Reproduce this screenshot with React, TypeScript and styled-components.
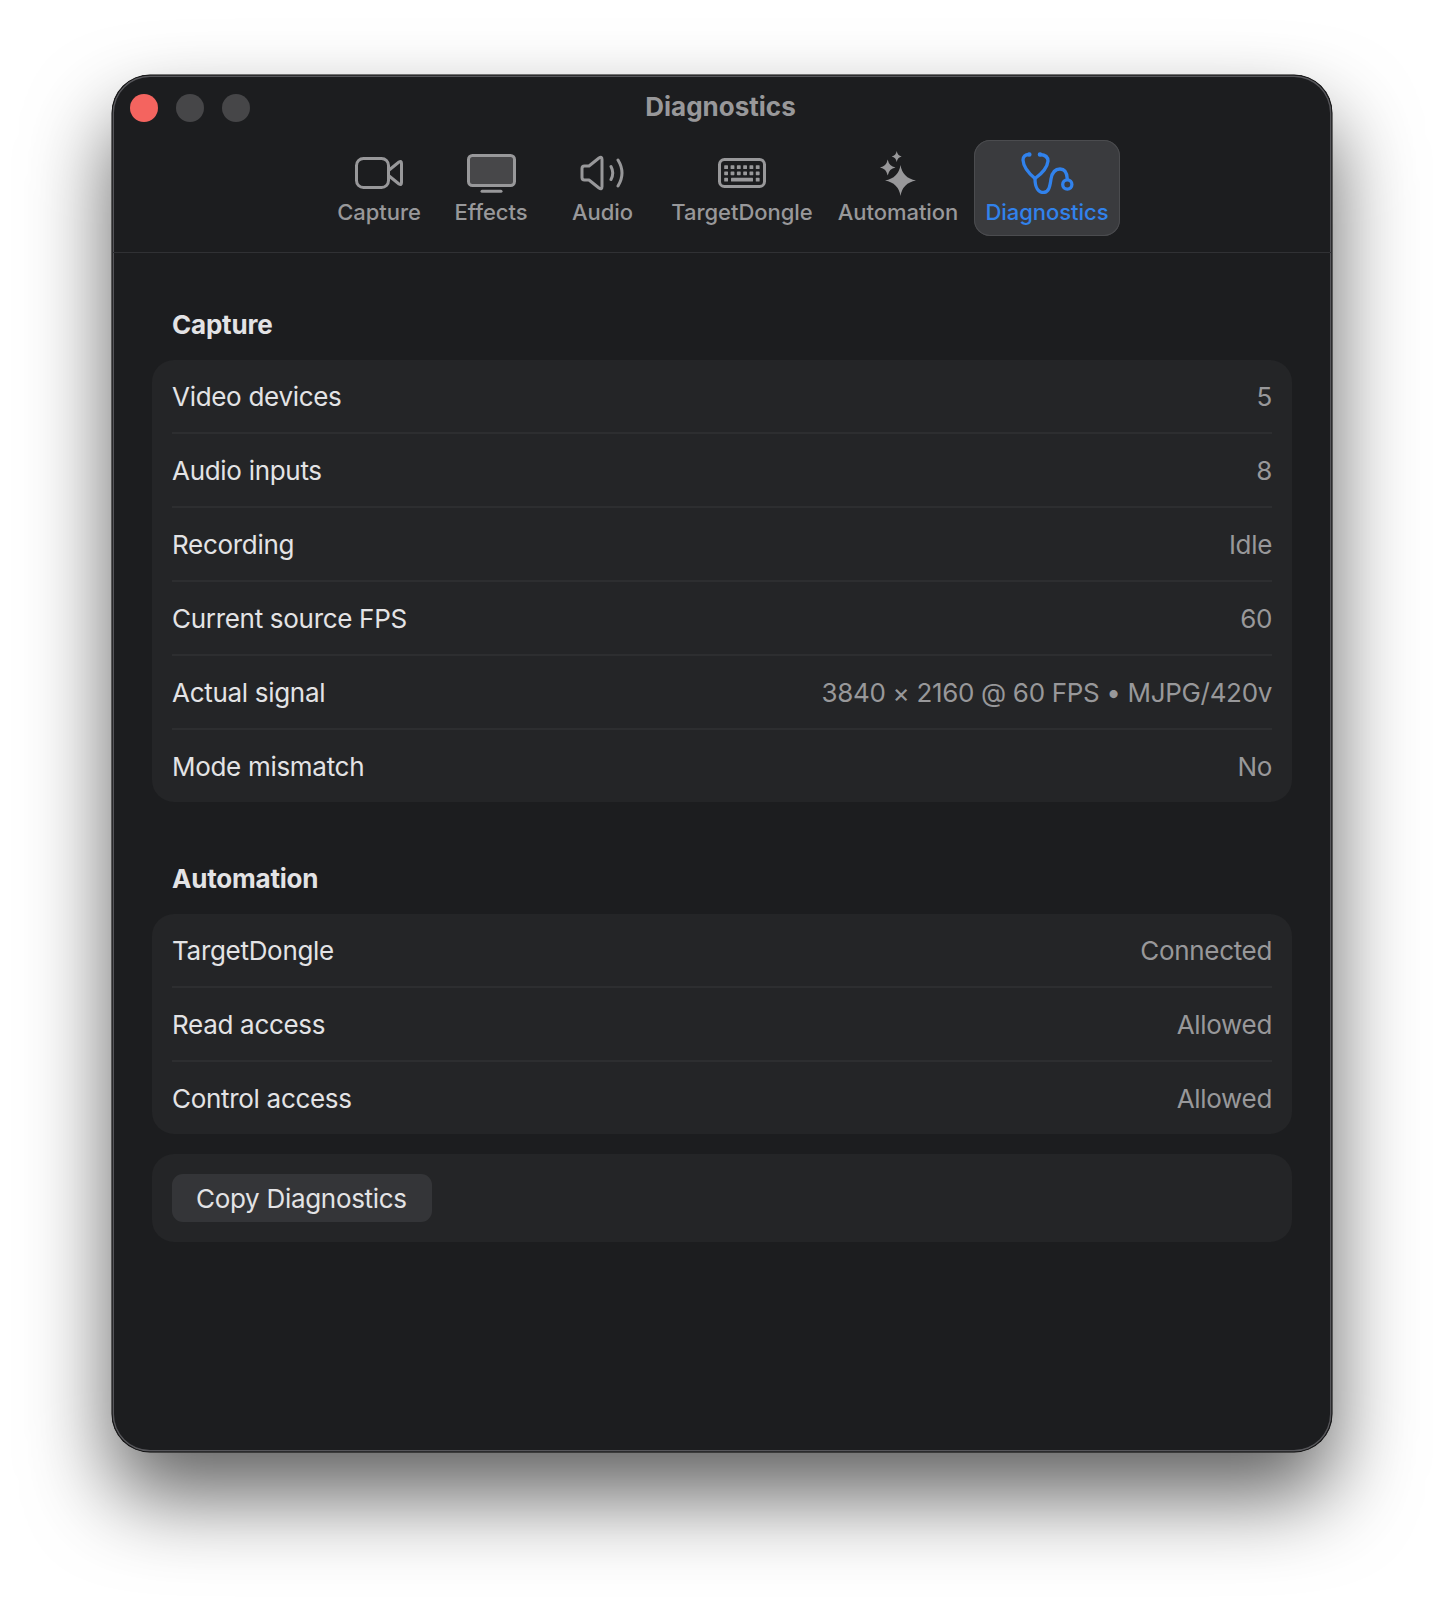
import React from 'react';
import styled, { createGlobalStyle } from 'styled-components';

const GlobalStyle = createGlobalStyle`
  html, body {
    margin: 0;
    padding: 0;
    background: #fff;
  }
  body {
    font-family: Inter, "Liberation Sans", sans-serif;
  }
`;

type RowData = { label: string; value: string };

const captureRows: RowData[] = [
  { label: 'Video devices', value: '5' },
  { label: 'Audio inputs', value: '8' },
  { label: 'Recording', value: 'Idle' },
  { label: 'Current source FPS', value: '60' },
  { label: 'Actual signal', value: '3840 × 2160 @ 60 FPS • MJPG/420v' },
  { label: 'Mode mismatch', value: 'No' },
];

const automationRows: RowData[] = [
  { label: 'TargetDongle', value: 'Connected' },
  { label: 'Read access', value: 'Allowed' },
  { label: 'Control access', value: 'Allowed' },
];

function CaptureIcon() {
  return (
    <svg width="48" height="32" viewBox="0 0 48 32" fill="none" stroke="currentColor" strokeWidth="3" strokeLinejoin="round">
      <rect x="1.5" y="1.500" width="32" height="29" rx="7" />
      <path d="M33.500 13.500 44 5q2.500-1.500 2.500 1.500v19q0 3-2.500 1.500L33.500 18.500" />
    </svg>
  );
}

function EffectsIcon() {
  return (
    <svg width="49" height="39" viewBox="0 0 49 39" fill="none" stroke="currentColor" strokeWidth="3">
      <rect x="1.500" y="1.500" width="46" height="30" rx="4" fill="#474749" />
      <path d="M15 37.200h19" strokeLinecap="round" />
    </svg>
  );
}

function AudioIcon() {
  return (
    <svg width="46" height="36" viewBox="0 0 46 36" fill="none" stroke="currentColor" strokeWidth="3" strokeLinecap="round" strokeLinejoin="round">
      <path d="M2 13.500Q2 11 4.500 11H9L19 3q3-2 3 1.500v27q0 3.500-3 1.500L9 25H4.500Q2 25 2 22.500z" />
      <path d="M31 11.500Q34.500 18 31 24.500M38 5q8 13 0 26" />
    </svg>
  );
}

function KeyboardIcon() {
  const xs = [6.2, 12.6, 18.9, 25.2, 31.5, 37.8];
  return (
    <svg width="48" height="30" viewBox="0 0 48 30" fill="currentColor">
      <rect x="1.500" y="1.500" width="45" height="27" rx="5" fill="none" stroke="currentColor" strokeWidth="3" />
      {xs.map(x => (
        <rect key={`a${x}`} x={x} y="7.200" width="3.800" height="3.800" rx="0.6" />
      ))}
      {xs.map(x => (
        <rect key={`b${x}`} x={x} y="13.400" width="3.800" height="3.800" rx="0.6" />
      ))}
      <rect x="6.200" y="19.800" width="3.800" height="3.800" rx="0.6" />
      <rect x="13" y="19.800" width="22" height="3.800" rx="0.6" />
      <rect x="37.800" y="19.800" width="3.800" height="3.800" rx="0.6" />
    </svg>
  );
}

function SparkleIcon() {
  return (
    <svg width="36" height="45" viewBox="0 0 36 45" fill="currentColor">
      <path d="M20.500 14Q22.500 27 36 29.500 22.500 32 20.500 45 18.500 32 5 29.500 18.500 27 20.500 14z" />
      <path d="M7.700 8.500Q9 15.300 15.500 16.500 9 17.700 7.700 24.500 6.400 17.700 0 16.500 6.400 15.300 7.700 8.500z" />
      <path d="M16.700 0Q17.500 4.700 21.700 5.500 17.500 6.300 16.700 11 15.900 6.300 11.700 5.500 15.900 4.700 16.700 0z" />
    </svg>
  );
}

function StethoscopeIcon() {
  return (
    <svg width="53" height="42" viewBox="0 0 53 42" fill="none" stroke="currentColor" strokeWidth="3.300" strokeLinecap="round">
      <path d="M8 2.500Q2 2.500 2 8q.5 9 12 18.500M19 2.500Q27 3 27 9q-1 9-13 17.500" />
      <path d="M14 26.500C14 35 17 40.500 22.500 40.500 28 40.500 29 34 30 27 31 21 34 17 39 17 44 17 46 21 46.300 27" />
      <circle cx="8.300" cy="2.500" r="1.300" fill="currentColor" strokeWidth="2" />
      <circle cx="19" cy="2.500" r="1.300" fill="currentColor" strokeWidth="2" />
      <circle cx="46.300" cy="32.500" r="4.600" />
    </svg>
  );
}

const tabs = [
  { label: 'Capture', icon: <CaptureIcon />, width: 112 },
  { label: 'Effects', icon: <EffectsIcon />, width: 112 },
  { label: 'Audio', icon: <AudioIcon />, width: 111 },
  { label: 'TargetDongle', icon: <KeyboardIcon />, width: 168 },
  { label: 'Automation', icon: <SparkleIcon />, width: 144 },
  { label: 'Diagnostics', icon: <StethoscopeIcon />, width: 146, active: true },
];

export default function App() {
  return (
    <Page>
      <GlobalStyle />
      <Window>
        <TitleBar>
          <Lights>
            <Light $color="#f4645f" />
            <Light $color="#464648" />
            <Light $color="#464648" />
          </Lights>
          <Title>Diagnostics</Title>
        </TitleBar>
        <Toolbar>
          {tabs.map(tab => (
            <Tab key={tab.label} $width={tab.width} $active={tab.active}>
              <TabIcon>{tab.icon}</TabIcon>
              <TabLabel>{tab.label}</TabLabel>
            </Tab>
          ))}
        </Toolbar>
        <Content>
          <SectionTitle>Capture</SectionTitle>
          <Card>
            {captureRows.map(row => (
              <Row key={row.label}>
                <RowLabel>{row.label}</RowLabel>
                <RowValue>{row.value}</RowValue>
              </Row>
            ))}
          </Card>
          <SectionTitle $spaced>Automation</SectionTitle>
          <Card>
            {automationRows.map(row => (
              <Row key={row.label}>
                <RowLabel>{row.label}</RowLabel>
                <RowValue>{row.value}</RowValue>
              </Row>
            ))}
          </Card>
          <ActionCard>
            <CopyButton>Copy Diagnostics</CopyButton>
          </ActionCard>
        </Content>
      </Window>
    </Page>
  );
}

const Page = styled.div`
  width: 1444px;
  height: 1600px;
  padding: 75px 112px 0;
  box-sizing: border-box;
  overflow: hidden;
  background: #fff;
`;

const Window = styled.div`
  width: 1220px;
  height: 1377px;
  box-sizing: border-box;
  background: #1c1d1f;
  border-radius: 38px;
  box-shadow: 0 0 0 0.5px #000, inset 0 0 0 0.5px #000, inset 0 0 0 2px #56565a, 0 44px 84px rgba(0, 0, 0, 0.62);
`;

const TitleBar = styled.div`
  position: relative;
  height: 65px;
  padding-right: 3px;
  display: flex;
  align-items: flex-start;
  justify-content: center;
`;

const Lights = styled.div`
  position: absolute;
  left: 18px;
  top: 19px;
  display: flex;
  gap: 18px;
`;

const Light = styled.span<{ $color: string }>`
  width: 28px;
  height: 28px;
  border-radius: 50%;
  background: ${props => props.$color};
`;

const Title = styled.div`
  color: #98989a;
  font-size: 26px;
  font-weight: 700;
  line-height: 63px;
`;

const Toolbar = styled.div`
  height: 112px;
  padding-right: 1px;
  display: flex;
  justify-content: center;
  align-items: flex-start;
  border-bottom: 1px solid #303134;
`;

const Tab = styled.div<{ $width: number; $active?: boolean }>`
  width: ${props => props.$width}px;
  height: 96px;
  box-sizing: border-box;
  margin-left: ${props => (props.$active ? '4px' : '0')};
  padding-top: 10px;
  display: flex;
  flex-direction: column;
  align-items: center;
  border-radius: 16px;
  color: ${props => (props.$active ? '#3182ec' : '#98989a')};
  background: ${props => (props.$active ? '#3a3b3e' : 'transparent')};
  box-shadow: ${props => (props.$active ? 'inset 0 0 0 1px #4b4c4f' : 'none')};
`;

const TabIcon = styled.div`
  height: 46px;
  display: flex;
  align-items: center;
  justify-content: center;
`;

const TabLabel = styled.div`
  font-size: 22px;
  font-weight: 500;
  letter-spacing: -0.05px;
  line-height: 32px;
  white-space: nowrap;
`;

const Content = styled.div`
  padding: 56px 40px 0;
`;

const SectionTitle = styled.div<{ $spaced?: boolean }>`
  margin: ${props => (props.$spaced ? '61px' : '0')} 0 19px 20px;
  color: #e3e3e5;
  font-size: 26px;
  font-weight: 700;
  letter-spacing: -0.2px;
  line-height: 32px;
`;

const Card = styled.div`
  padding: 0 20px;
  background: #242527;
  border-radius: 22px;
`;

const Row = styled.div`
  height: 74px;
  box-sizing: border-box;
  display: flex;
  align-items: center;
  justify-content: space-between;
  border-top: 2px solid #2d2e30;

  &:first-child {
    height: 72px;
    border-top: none;
  }
`;

const RowLabel = styled.span`
  color: #e3e3e5;
  font-size: 26px;
  letter-spacing: -0.3px;
`;

const RowValue = styled.span`
  color: #98989a;
  font-size: 26px;
  letter-spacing: -0.33px;
`;

const ActionCard = styled(Card)`
  margin-top: 20px;
  padding: 20px;
`;

const CopyButton = styled.button`
  display: block;
  width: 260px;
  height: 48px;
  padding: 0 0 0 24px;
  border: none;
  border-radius: 11px;
  background: #343538;
  color: #e3e3e5;
  font-family: inherit;
  font-size: 26px;
  letter-spacing: -0.3px;
  text-align: left;
`;
